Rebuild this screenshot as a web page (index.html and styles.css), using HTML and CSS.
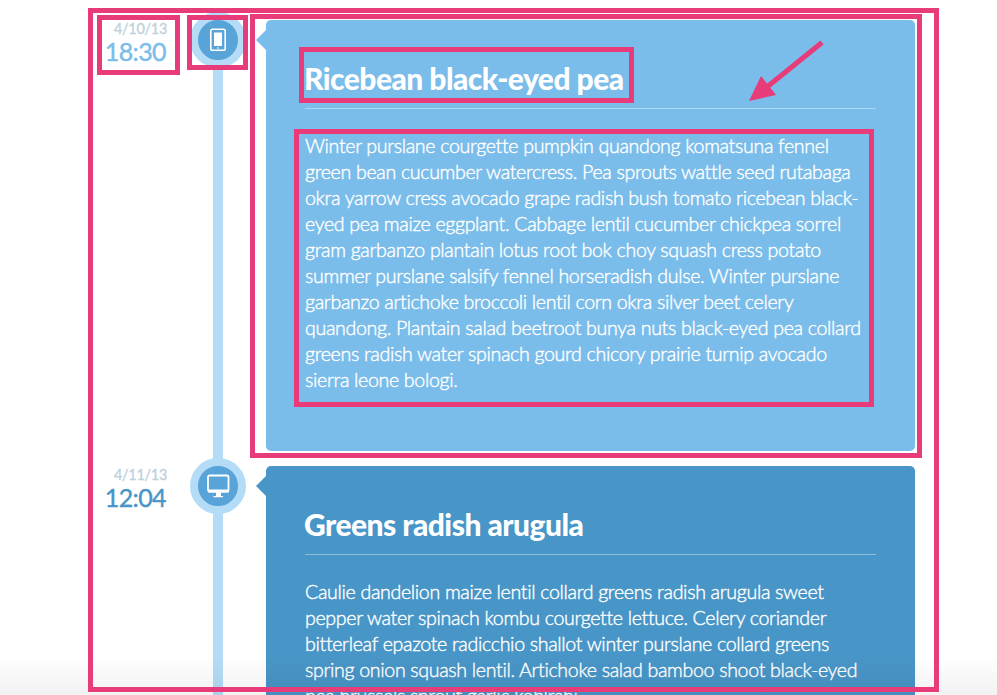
FILE: index.html
```
<!DOCTYPE html>
<html lang="en">
<head>
<meta charset="utf-8">
<title>Vertical Timeline</title>
<link rel="stylesheet" href="styles.css">
</head>
<body>
<ul class="timeline">
  <li class="entry entry-light">
    <time class="time"><span class="date">4/10/13</span><span class="hour">18:30</span></time>
    <div class="rail"><div class="icon">
      <svg width="16" height="24" viewBox="0 0 16 24"><rect x=".8" y="1.3" width="14.4" height="21" rx="1.8" fill="#58a3d8" stroke="#fff" stroke-width="1.6"/><rect x="4" y="4.5" width="8" height="13.5" fill="#fff"/><path d="M7 20h2" stroke="#fff"/></svg>
    </div></div>
    <article class="card">
      <h2>Ricebean black-eyed pea</h2>
      <p>Winter purslane courgette pumpkin quandong komatsuna fennel<br>green bean cucumber watercress. Pea sprouts wattle seed rutabaga<br>okra yarrow cress avocado grape radish bush tomato ricebean black-<br>eyed pea maize eggplant. Cabbage lentil cucumber chickpea sorrel<br>gram garbanzo plantain lotus root bok choy squash cress potato<br>summer purslane salsify fennel horseradish dulse. Winter purslane<br>garbanzo artichoke broccoli lentil corn okra silver beet celery<br>quandong. Plantain salad beetroot bunya nuts black-eyed pea collard<br>greens radish water spinach gourd chicory prairie turnip avocado<br>sierra leone bologi.</p>
    </article>
  </li>
  <li class="entry entry-dark">
    <time class="time"><span class="date">4/11/13</span><span class="hour">12:04</span></time>
    <div class="rail"><div class="icon">
      <svg width="24" height="24" viewBox="0 0 24 24"><rect x="2" y="1.5" width="20.5" height="16" rx="1.5" fill="none" stroke="#fff" stroke-width="1.8"/><path d="M2 15.5h21v3H2zM10 18h5v4h-5zM7.5 22h9.5v1.3H7.5z" fill="#fff"/></svg>
    </div></div>
    <article class="card">
      <h2>Greens radish arugula</h2>
      <p>Caulie dandelion maize lentil collard greens radish arugula sweet<br>pepper water spinach kombu courgette lettuce. Celery coriander<br>bitterleaf epazote radicchio shallot winter purslane collard greens<br>spring onion squash lentil. Artichoke salad bamboo shoot black-eyed<br>pea brussels sprout garlic kohlrabi.</p>
    </article>
  </li>
</ul>
<div class="fade"></div>
<svg class="notes" width="997" height="695" viewBox="0 0 997 695">
  <g fill="none" stroke="#e73b7a" stroke-width="5">
    <rect x="90.5" y="10.5" width="846" height="679"/>
    <rect x="99.5" y="17.5" width="78" height="55"/>
    <rect x="189.5" y="17.5" width="56" height="50"/>
    <rect x="252.5" y="16.5" width="667" height="439"/>
    <rect x="301.5" y="49.5" width="330" height="51"/>
    <rect x="296.5" y="131.5" width="575" height="273"/>
    <path d="M822 42.5L767 87"/>
  </g>
  <path d="M749 101L761 76L776 95z" fill="#e73b7a"/>
</svg>
</body>
</html>
```
FILE: styles.css
```
* { box-sizing: border-box; }
body {
  margin: 0;
  height: 695px;
  overflow: hidden;
  background: #fff;
  font-family: Lato, sans-serif;
  font-variant-ligatures: none;
}
.timeline {
  height: 695px;
  margin: 0;
  padding: 12px 0 0 88px;
  overflow: hidden;
  list-style: none;
}
.entry {
  display: grid;
  grid-template-columns: 79px 99px 649px;
  height: 446px;
}
.entry:nth-child(2) { height: 480px; }
.time {
  display: flex;
  flex-direction: column;
  align-items: flex-end;
  padding-top: 8px;
}
.date {
  font-size: 14.4px;
  line-height: 18px;
  letter-spacing: -.25px;
  color: #bdd0db;
  -webkit-text-stroke: .3px;
}
.hour {
  margin: -2px 1px 0 0;
  font-size: 25px;
  line-height: 30px;
  letter-spacing: -.6px;
  color: #7abcea;
  -webkit-text-stroke: .4px;
}
.entry-dark .hour { color: #4895c7; }
.rail {
  margin-left: 23px;
  width: 56px;
  background: linear-gradient(#b4dcf6, #b4dcf6) 23px 0 / 10px 100% no-repeat;
}
.icon {
  display: flex;
  align-items: center;
  justify-content: center;
  width: 56px;
  height: 56px;
  border: 8px solid #b4dcf6;
  border-radius: 50%;
  background: #58a3d8;
}
.entry-light { --card: #7abcea; --rule: #aed7f2; }
.entry-dark { --card: #4895c7; --rule: #8fbedd; }
.card {
  position: relative;
  height: 431px;
  margin-top: 8px;
  padding: 36px 39px 0;
  border-radius: 5px;
  background: var(--card);
  color: #fff;
}
.card::before {
  content: "";
  position: absolute;
  left: -10px;
  top: 10px;
  border: 10px solid transparent;
  border-left: 0;
  border-right-color: var(--card);
}
h2 {
  margin: 0;
  height: 53px;
  border-bottom: 1px solid var(--rule);
  font-size: 30px;
  line-height: 44px;
  font-weight: 900;
  letter-spacing: -.53px;
  text-indent: -1px;
  white-space: nowrap;
}
p {
  margin: 24px 0 0;
  font-size: 19.6px;
  line-height: 26px;
  font-weight: 300;
  letter-spacing: -.33px;
  -webkit-text-stroke: .4px;
  white-space: nowrap;
}
.fade {
  position: absolute;
  inset: auto 0 0;
  height: 40px;
  background: linear-gradient(rgba(0,0,0,0), rgba(0,0,0,.05));
}
.notes { position: absolute; left: 0; top: 0; }
```
